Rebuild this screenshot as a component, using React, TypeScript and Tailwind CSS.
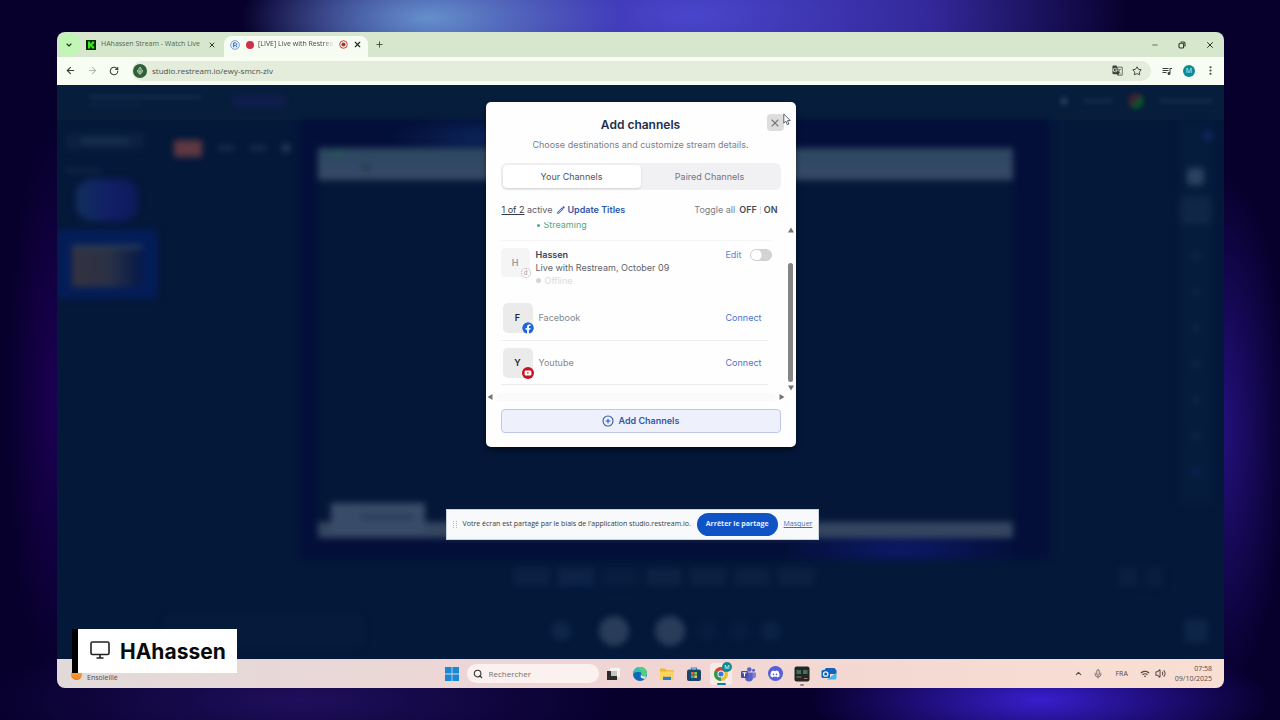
import type { ReactNode } from "react";
import {
  ArrowLeft,
  ArrowRight,
  ChevronDown,
  ChevronUp,
  CirclePlus,
  EllipsisVertical,
  Mic,
  Minus,
  Plus,
  RotateCw,
  Search,
  Star,
  Volume2,
  X,
} from "lucide-react";
import { FaDiscord, FaFacebook } from "react-icons/fa";
import { MdGTranslate, MdOutlineModeEdit, MdQueueMusic, MdWifi } from "react-icons/md";

function KickLogo() {
  return (
    <svg viewBox="0 0 10 10" className="size-[10px] shrink-0" aria-hidden="true">
      <rect width="10" height="10" fill="#062b06" />
      <path d="M2 1.5h2.2v2h.8v-1h1v-1h2.2v2.2H7.2v.8H6.4v1h.8v.8h1v2.2H6v-1H5v-1h-.8v2H2z" fill="#35e81c" />
    </svg>
  );
}

function RestreamLogo() {
  return (
    <svg viewBox="0 0 10 10" className="size-[10px] shrink-0" aria-hidden="true">
      <circle cx="5" cy="5" r="4.4" fill="#dfeafa" stroke="#6a94dc" strokeWidth=".8" />
      <path d="M3.6 7.2V2.9h1.9a1.3 1.3 0 0 1 .3 2.5L7 7.2M3.6 5.4h2" fill="none" stroke="#3c6fc9" strokeWidth="1" />
    </svg>
  );
}

function RecordMark() {
  return (
    <svg viewBox="0 0 10 10" className="size-[9px] shrink-0" aria-hidden="true">
      <circle cx="5" cy="5" r="4.2" fill="none" stroke="#b3322e" strokeWidth="1" />
      <circle cx="5" cy="5" r="2.3" fill="#b3322e" />
    </svg>
  );
}

function BrowserTabs() {
  return (
    <div className="flex h-[25px] shrink-0 items-stretch bg-[#d6e7cd] text-[7px] text-[#566452]">
      <button aria-label="Search tabs" className="my-[2px] ml-[2px] flex w-5 items-center justify-center rounded-md bg-[#c0f5b4] text-[#1d3a1b]">
        <ChevronDown className="size-2" strokeWidth={3.5} />
      </button>
      <div className="ml-[7px] flex w-[138px] items-center gap-[5px] pr-2">
        <KickLogo />
        <span className="min-w-0 flex-1 overflow-hidden whitespace-nowrap">HAhassen Stream - Watch Live</span>
        <button aria-label="Close tab HAhassen Stream">
          <X className="size-2 text-[#2f3a2c]" strokeWidth={3} />
        </button>
      </div>
      <div className="mt-1 flex w-[144px] items-center gap-[5px] rounded-t-lg bg-[#f7fcf2] pr-[6px] pb-1 pl-[6px] text-[#42493f]">
        <RestreamLogo />
        <span className="ml-[1px] size-2 shrink-0 rounded-full bg-[#cf3049]" />
        <span className="-ml-px min-w-0 flex-1 overflow-hidden mask-r-from-85% whitespace-nowrap">[LIVE] Live with Restream</span>
        <RecordMark />
        <button aria-label="Close tab Live with Restream">
          <X className="size-[9px] text-[#1f241e]" strokeWidth={3} />
        </button>
      </div>
      <button aria-label="New tab" className="ml-[7px]">
        <Plus className="size-[9px] text-[#40513c]" strokeWidth={2.5} />
      </button>
      <div className="ml-auto flex items-center gap-[19px] pr-[9px] text-[#30362e]">
        <button aria-label="Minimize">
          <Minus className="size-2" strokeWidth={2} />
        </button>
        <button aria-label="Restore">
          <svg viewBox="0 0 8 8" className="size-2" fill="none" stroke="currentColor" strokeWidth="1.1">
            <rect x="1" y="2.2" width="4.6" height="4.8" rx="1" />
            <path d="M2.6 1h3a1.4 1.4 0 0 1 1.4 1.4v3" />
          </svg>
        </button>
        <button aria-label="Close window">
          <X className="size-[10px]" strokeWidth={2.4} />
        </button>
      </div>
    </div>
  );
}

function AddressBar() {
  return (
    <div className="flex h-7 shrink-0 items-center bg-[#f8fdf3] pb-px text-[#3d433b]">
      <button aria-label="Back" className="ml-2">
        <ArrowLeft className="size-[11px]" strokeWidth={2.4} />
      </button>
      <button aria-label="Forward" className="ml-[11px] text-[#b0b6ac]">
        <ArrowRight className="size-[11px]" strokeWidth={2.2} />
      </button>
      <button aria-label="Reload" className="ml-[11px]">
        <RotateCw className="size-[10px]" strokeWidth={2.6} />
      </button>
      <div className="ml-[13px] flex h-[20px] min-w-0 flex-1 items-center rounded-full bg-[#e4ecdc] pl-px">
        <span className="flex size-[14px] items-center justify-center rounded-full bg-[#2d6136] text-[#e4f2e0]">
          <Mic className="size-2" strokeWidth={2.6} />
        </span>
        <input
          aria-label="Address"
          defaultValue="studio.restream.io/ewy-smcn-zlv"
          className="ml-[5px] min-w-0 flex-1 bg-transparent text-[8px] leading-3 text-[#4a5147] outline-none"
        />
        <button aria-label="Translate">
          <MdGTranslate className="size-[11px]" />
        </button>
        <button aria-label="Bookmark" className="mr-[9px] ml-[9px]">
          <Star className="size-[10px]" strokeWidth={2.4} />
        </button>
      </div>
      <button aria-label="Media controls" className="ml-[10px]">
        <MdQueueMusic className="size-3" />
      </button>
      <button aria-label="Profile" className="ml-[10px] flex size-3 items-center justify-center rounded-full bg-[#108a92] text-[7px] leading-none text-[#d4f0f0]">
        M
      </button>
      <button aria-label="Menu" className="mr-2 ml-[10px]">
        <EllipsisVertical className="size-[11px]" strokeWidth={2.6} />
      </button>
    </div>
  );
}

function StudioBackdrop() {
  return (
    <div aria-hidden="true" className="flex flex-1 flex-col bg-[#04183a]">
      <div className="flex h-[35px] items-center bg-[#071d3c] px-3 pb-[3px]">
        <div className="ml-5 flex flex-col gap-1 blur-[2px]">
          <span className="h-1 w-28 bg-[#122a4a]" />
          <span className="h-1 w-13 bg-[#0d2444]" />
        </div>
        <span className="ml-8 h-3 w-13 rounded bg-[#101e4d] blur-[3px]" />
        <div className="ml-auto flex items-center gap-4 blur-[2px]">
          <span className="size-2 rounded-full bg-[#22395a]" />
          <span className="h-1 w-7 bg-[#142d4d]" />
          <span className="size-4 rounded-full bg-linear-to-br from-[#3a2233] from-40% to-[#08502c] to-60%" />
          <span className="h-1 w-13 bg-[#142d4b]" />
        </div>
      </div>
      <div className="flex flex-1">
        <div className="flex w-[100px] flex-col blur-[3px]">
          <span className="mt-3 ml-2 h-[18px] w-20 rounded bg-[#0b2140] px-4 py-[7px]">
            <span className="block h-1 bg-[#1e3857]" />
          </span>
          <span className="mt-[19px] ml-2 h-[3px] w-9 bg-[#152d4d]" />
          <span className="mt-[7px] ml-[19px] h-[42px] w-[62px] rounded-2xl bg-linear-to-r from-[#122f5b] via-[#111f66] to-[#0e1a5c]" />
          <div className="mt-[9px] h-[68px] bg-[#041d58] px-[15px] pt-[15px]">
            <span className="block h-1 bg-[#2a4054]" />
            <span className="block h-[38px] bg-linear-to-r from-[#33313f] via-[#2c3145] to-[#061848]" />
          </div>
        </div>
        <div className="flex min-w-0 flex-1 flex-col">
          <div className="flex flex-1">
            <div className="flex w-[143px] items-start gap-4 pt-5 pl-[17px] blur-[3px]">
              <span className="h-[17px] w-7 bg-[#5f3841]" />
              <span className="mt-[6px] h-1 w-4 bg-[#1c3554]" />
              <span className="mt-[6px] h-1 w-4 bg-[#1c3554]" />
              <span className="mt-1 size-2 rounded-full bg-[#2b435f]" />
            </div>
            <div className="flex flex-1 flex-col bg-[#030f38] bg-[radial-gradient(ellipse_90px_24px_at_180px_18px,#0c2459,transparent),radial-gradient(ellipse_120px_30px_at_600px_430px,#0c1a68,transparent)] pt-7 pr-[37px] pb-[21px] pl-[18px] blur-[3px]">
              <div className="flex h-8 items-start gap-5 bg-linear-to-b from-[#2c4760] to-[#374a68] px-4 pt-1 pr-2">
                <span className="h-1 w-2 bg-[#20634b]" />
                <span className="mt-3 size-2 rounded-full bg-[#233c50]" />
              </div>
              <div className="flex flex-1 flex-col items-start justify-end bg-[#041738] pl-[13px]">
                <span className="h-[19px] w-[94px] bg-[#384c69] px-3 pt-3">
                  <span className="ml-auto block h-1 w-13 bg-[#22385a]" />
                </span>
              </div>
              <div className="h-4 bg-[#344560] pl-[13px]">
                <span className="block h-3 w-[94px] bg-[#384c69]" />
              </div>
            </div>
            <div className="w-[117px]" />
          </div>
          <div className="flex h-9 items-center justify-between pl-[357px] blur-[3px]">
            <div className="flex gap-2">
              <span className="h-[18px] w-9 bg-[#0b2143]" />
              <span className="h-[18px] w-9 bg-[#0e2348]" />
              <span className="h-[18px] w-9 bg-[#081d3f]" />
              <span className="h-[18px] w-9 bg-[#0c2243]" />
              <span className="h-[18px] w-9 bg-[#0b2141]" />
              <span className="h-[18px] w-9 bg-[#0b2141]" />
              <span className="h-[18px] w-9 bg-[#0b2141]" />
            </div>
            <div className="mr-1 flex gap-2">
              <span className="h-5 w-[18px] bg-[#0a2041]" />
              <span className="h-5 w-[18px] bg-[#081e3e]" />
            </div>
          </div>
          <div className="flex h-16 items-center pt-2 pl-2 blur-[3px]">
            <span className="h-8 w-[198px] rounded bg-[#061b3c]" />
            <span className="ml-[188px] size-5 rounded-full bg-[#0f2648]" />
            <span className="ml-[28px] size-[30px] rounded-full bg-[#293d5b]" />
            <span className="ml-[26px] size-[30px] rounded-full bg-[#293d5b]" />
            <span className="ml-3 size-5 rounded-full bg-[#071d3f]" />
            <span className="ml-3 size-5 rounded-full bg-[#071d3f]" />
            <span className="ml-3 size-5 rounded-full bg-[#0b2244]" />
          </div>
        </div>
        <div className="flex w-[57px] flex-col items-center justify-between pb-3 blur-[3px]">
          <div className="flex w-8 flex-col items-center gap-7 bg-[#061c3d] pt-3 pb-7">
            <span className="size-2 self-end rounded-full bg-[#112b6c]" />
            <span className="size-[17px] rounded bg-[#2c4260]" />
            <span className="-mt-4 h-[27px] w-8 rounded bg-[#0f2646]" />
            <span className="size-2 rounded-full bg-[#0e2745]" />
            <span className="size-2 rounded-full bg-[#0d2447]" />
            <span className="size-2 rounded-full bg-[#0d2447]" />
            <span className="size-2 rounded-full bg-[#0e2745]" />
            <span className="size-2 rounded-full bg-[#0d2447]" />
            <span className="size-2 rounded-full bg-[#0e2745]" />
            <span className="size-2 rounded-full bg-[#0b2156]" />
          </div>
          <span className="mb-1 size-6 rounded bg-[#0d2547]" />
        </div>
      </div>
    </div>
  );
}

function Triangle({ className }: { className: string }) {
  return (
    <svg viewBox="0 0 6 6" className={`size-[6px] ${className}`} fill="#70757b" aria-hidden="true">
      <path d="M3 .5 6 5.5H0z" />
    </svg>
  );
}

function ConnectRow({ letter, name, badge }: { letter: string; name: string; badge: ReactNode }) {
  return (
    <div className="mr-6 ml-[2px] flex h-[30px] items-center">
      <div className="relative flex size-[30px] items-center justify-center rounded-[5px] bg-[#ebebeb] text-[9px] font-semibold text-[#22262c]">
        {letter}
        <span className="absolute -right-px -bottom-px size-3">{badge}</span>
      </div>
      <span className="ml-[6px] text-[#85888e]">{name}</span>
      <button className="ml-auto text-[#4a73cf]" aria-label={`Connect ${name}`}>
        Connect
      </button>
    </div>
  );
}

function AddChannelsDialog() {
  return (
    <section
      role="dialog"
      aria-labelledby="dialog-title"
      className="relative flex w-[310px] flex-col rounded-[5px] bg-[#fefefe] px-[15px] pt-3 pb-[14px] font-[Inter,'Liberation_Sans',sans-serif] text-[9px] leading-3 text-[#5d626c] shadow-md shadow-black/40"
    >
      <h1 id="dialog-title" className="text-center text-[12px] leading-[22px] font-semibold text-[#222f4d]">
        Add channels
      </h1>
      <p className="mt-[3px] text-center text-[#7c8088]">Choose destinations and customize stream details.</p>
      <button aria-label="Close" className="absolute top-3 right-3 flex size-[17px] items-center justify-center rounded bg-[#dddddd] text-[#74777c]">
        <X className="size-3" strokeWidth={2.2} />
      </button>
      <svg viewBox="0 0 8 13" className="absolute top-[11px] right-[5px] h-[13px] w-2" fill="#fff" stroke="#4a5062" strokeWidth=".9" aria-hidden="true">
        <path d="M.8.9v9.2l2.1-1.9 1.4 3.5 1.600-.7-1.400-3.400h2.800z" />
      </svg>

      <div role="tablist" className="mt-3 flex h-[27px] rounded-md bg-[#f1f1f3] p-[2px]">
        <button role="tab" aria-selected="true" className="flex-1 rounded bg-white text-[#4e5561] shadow-sm">
          Your Channels
        </button>
        <button role="tab" aria-selected="false" className="flex-1 text-[#70757f]">
          Paired Channels
        </button>
      </div>

      <div className="mt-[14px] flex items-center pr-[3px] pl-[1px]">
        <span>
          <span className="text-[#343b49] underline">1 of 2</span> active
        </span>
        <button className="ml-1 flex items-center gap-px font-semibold text-[#2f57ad]">
          <MdOutlineModeEdit className="size-[10px]" />
          Update Titles
        </button>
        <span className="ml-auto text-[#787c84]">Toggle all</span>
        <button className="ml-1 font-semibold text-[#464b54]">OFF</button>
        <span className="mx-[3px] h-2 w-px bg-[#dcdee2]" />
        <button className="font-semibold text-[#464b54]">ON</button>
      </div>

      <div className="-mx-[15px] mt-[6px] flex h-[171px]">
        <div className="min-w-0 flex-1 overflow-hidden pl-[15px]">
          <div className="flex h-[18px] items-start pl-9 text-[#55a981]">
            <span className="-mt-[3px] flex items-center gap-1">
              <span className="size-[3px] rounded-full bg-[#55a981]" />
              Streaming
            </span>
          </div>
          <div className="mr-[15px] h-px bg-[#f4f4f5]" />
          <div className="mt-[7px] mr-[14px] flex h-[55px]">
            <div className="relative flex size-[29px] items-center justify-center rounded-[5px] bg-[#f5f5f5] font-semibold text-[#9b9b9b]">
              H
              <span className="absolute -right-px -bottom-px flex size-[10px] items-center justify-center rounded-full border border-dotted border-[#a8a8a8] bg-[#fafafa] text-[6px] leading-none font-normal">
                d
              </span>
            </div>
            <div className="ml-[6px] leading-[13px]">
              <p className="font-semibold text-[#3c4358]">Hassen</p>
              <p>Live with Restream, October 09</p>
              <p className="flex items-center gap-1 text-[#dcdcde]">
                <span className="size-[5px] rounded-full bg-[#d4d4d6]" />
                Offline
              </p>
            </div>
            <div className="ml-auto flex h-[13px] items-center gap-2">
              <button className="text-[#5c88da]">Edit</button>
              <input
                type="checkbox"
                aria-label="Stream to Hassen"
                className="h-3 w-[22px] appearance-none rounded-full border border-[#cfcfcf] bg-[radial-gradient(circle_at_5px_5px,#fff_5px,#d3d3d3_6px)]"
              />
            </div>
          </div>
          <ConnectRow letter="F" name="Facebook" badge={<FaFacebook className="size-3 rounded-full bg-white text-[#1f66d6]" />} />
          <div className="my-[7px] mr-[18px] h-px bg-[#f0f0f1]" />
          <ConnectRow
            letter="Y"
            name="Youtube"
            badge={
              <svg viewBox="0 0 12 12" className="size-3" aria-hidden="true">
                <circle cx="6" cy="6" r="6" fill="#cb1020" />
                <rect x="2.6" y="3.5" width="6.8" height="5" rx="1.3" fill="#fff" />
                <path d="M5.3 4.9v2.2L7.1 6z" fill="#cb1020" />
              </svg>
            }
          />
          <div className="mt-[6px] mr-[18px] h-px bg-[#ececee]" />
        </div>
        <div className="flex w-[10px] flex-col items-center pt-[5px] pb-[2px]">
          <Triangle className="" />
          <span className="mt-[30px] w-[5px] flex-1 rounded-full bg-[#858585]" />
          <Triangle className="mt-[3px] rotate-180" />
        </div>
      </div>
      <div className="-mt-px mr-[-4px] -ml-[14px] flex h-[10px] items-center gap-1">
        <Triangle className="-rotate-90" />
        <span className="h-2 flex-1 rounded-full bg-[#fafafa]" />
        <Triangle className="rotate-90" />
      </div>

      <button className="mt-[7px] flex h-6 items-center justify-center gap-[5px] rounded border border-[#bcc7ea] bg-[#eef1fb] font-semibold text-[#3258a6]">
        <CirclePlus className="size-3" strokeWidth={2.2} />
        Add Channels
      </button>
    </section>
  );
}

function ShareBar() {
  return (
    <div className="flex h-[31px] items-center border border-[#c9d2de] bg-[#f7f9fa] px-[6px] text-[7px] whitespace-nowrap text-[#363b41]">
      <span className="h-[7px] w-1 border-x border-dotted border-[#b5b9bd]" />
      <span className="ml-[6px]">Votre écran est partagé par le biais de l'application studio.restream.io.</span>
      <button className="ml-[6px] h-[23px] rounded-full bg-[#0f53c5] px-[9px] font-bold text-[#e4edff]">Arrêter le partage</button>
      <a href="#masquer" className="ml-[6px] text-[#4570b4] underline">
        Masquer
      </a>
    </div>
  );
}

function WindowsLogo() {
  return (
    <svg viewBox="0 0 16 16" className="size-4" fill="#1888d8">
      <path d="M1 1h6.600v6.600H1zM8.400 1H15v6.600H8.400zM1 8.400h6.600V15H1zM8.400 8.400H15V15H8.400z" />
    </svg>
  );
}

function TaskViewIcon() {
  return (
    <svg viewBox="0 0 16 16" className="size-4">
      <rect x="5" y="2" width="10" height="9" fill="#f7f3f1" />
      <path d="M2 5h4v5h6v4H2z" fill="#2d2a2b" />
      <path d="M6 5h6v5H6z" fill="#c9c4c3" />
    </svg>
  );
}

function EdgeIcon() {
  return (
    <svg viewBox="0 0 16 16" className="size-4">
      <circle cx="8" cy="8" r="7" fill="#1268b8" />
      <path d="M1.2 6.6C2 3 4.7 1 8 1c4 0 7 2.7 7 6 0 2-1.6 3.4-3.6 3.4-1.5 0-2.5-.6-2-1.5.5-1 .1-2.9-2.4-2.9C4.6 6 2.200 6.200 1.200 8z" fill="#35bdb8" />
      <path d="M8 1c4 0 7 2.7 7 6 0 2-1.6 3.400-3.600 3.400-1.500 0-2.500-.6-2-1.500C10.400 6 9 3 5 2z" fill="#55cf7c" />
      <path d="M9.500 8.600c-.6 1.200.6 2 2 2 1.300 0 2.400-.4 3-1L13 12.700c-3.200.4-5.800-1.700-3.500-4.100z" fill="#e9eef2" />
    </svg>
  );
}

function FolderIcon() {
  return (
    <svg viewBox="0 0 16 16" className="size-4">
      <path d="M1 2.5h5l1.500 1.800H15V13H1z" fill="#eeb92f" />
      <path d="M1 5.500h14V14H1z" fill="#fbd45d" />
      <path d="M4 14v-3.200h8V14z" fill="#2482cf" />
    </svg>
  );
}

function StoreIcon() {
  return (
    <svg viewBox="0 0 16 16" className="size-4">
      <path d="M5.5 4V2h5v2" fill="none" stroke="#2d8bd0" strokeWidth="1.2" />
      <rect x="1" y="3.5" width="14" height="11.5" rx="2" fill="#17466f" />
      <path d="M5 6h2.700v2.700H5z" fill="#e9663c" />
      <path d="M8.300 6H11v2.700H8.300z" fill="#8fc640" />
      <path d="M5 9.300h2.700V12H5z" fill="#39a5e4" />
      <path d="M8.300 9.300H11V12H8.300z" fill="#f5c833" />
    </svg>
  );
}

function ChromeIcon() {
  return (
    <svg viewBox="0 0 16 16" className="size-4">
      <circle cx="8" cy="8" r="7" fill="#e9bf35" />
      <path d="M8 8 1.940 4.500A7 7 0 0 1 14.060 4.500z" fill="#d94236" />
      <path d="M8 8 1.940 4.500A7 7 0 0 0 8 15z" fill="#2e9a50" />
      <circle cx="8" cy="8" r="3.5" fill="#fff" />
      <circle cx="8" cy="8" r="2.6" fill="#3a78d8" />
    </svg>
  );
}

function TeamsIcon() {
  return (
    <svg viewBox="0 0 16 16" className="size-4" fill="#5a60c4">
      <circle cx="9.3" cy="3.5" r="2.3" />
      <circle cx="13.5" cy="4.3" r="1.5" />
      <path d="M5 6.500h8v5a4 4 0 0 1-8 0z" />
      <path d="M12.500 6.500H16V10a2.500 2.500 0 0 1-3.500 2z" fill="#7d82d9" />
      <rect x="1" y="5" width="7" height="7" rx="1" fill="#444aa8" />
      <path d="M2.500 6.800h4M4.500 6.800v3.700" stroke="#fff" strokeWidth="1" />
    </svg>
  );
}

function TerminalIcon() {
  return (
    <svg viewBox="0 0 16 16" className="size-4">
      <rect x=".5" y=".5" width="15" height="15" rx="2" fill="#252726" />
      <rect x="2.5" y="4" width="4.5" height="4" fill="#3d7460" />
      <rect x="9" y="4" width="4.5" height="4" fill="#486f63" />
      <path d="M2.500 11h5M10 12.500h3.500" stroke="#a47863" strokeWidth="1" />
    </svg>
  );
}

function OutlookIcon() {
  return (
    <svg viewBox="0 0 16 16" className="size-4">
      <path d="M3 4.500 5 2h8.500l2 2.500V8H3z" fill="#1761b8" />
      <path d="m6 13.500 9.500-7V12a1.500 1.500 0 0 1-1.500 1.500H6z" fill="#42b7ef" />
      <rect x=".5" y="4" width="8.5" height="8" rx="1.5" fill="#0d64b8" />
      <circle cx="4.700" cy="8" r="2.200" fill="none" stroke="#e3f2fc" strokeWidth="1.3" />
    </svg>
  );
}

function TaskButton({ label, children }: { label: string; children: ReactNode }) {
  return (
    <button aria-label={label} className="flex h-full w-[27px] items-center justify-center">
      {children}
    </button>
  );
}

function Taskbar() {
  return (
    <footer className="grid h-[29px] shrink-0 grid-cols-[1fr_auto_1fr] items-center bg-linear-to-r from-[#e2dada] via-[#f0d5d3] via-50% to-[#f9dfd2] text-[#544c4c]">
      <div className="flex h-full items-end gap-[5px] pb-1 pl-[14px] text-[7px] leading-3">
        <span className="mb-1 size-[11px] rounded-full bg-linear-to-b from-[#f4b23c] to-[#ee7d20]" />
        Ensoleillé
      </div>
      <div className="flex h-full items-center pl-[5px]">
        <button aria-label="Start" className="mr-[7px]">
          <WindowsLogo />
        </button>
        <label className="flex h-[19px] w-[132px] items-center gap-[6px] rounded-full bg-[#fbf1ee] px-[6px]">
          <Search className="size-[10px] shrink-0 text-[#343231]" strokeWidth={2.6} />
          <span className="sr-only">Rechercher</span>
          <input type="search" placeholder="Rechercher" className="w-full min-w-0 bg-transparent text-[8px] leading-3 outline-none placeholder:text-[#77706f]" />
        </label>
        <div className="ml-px flex h-full">
          <TaskButton label="Task view">
            <TaskViewIcon />
          </TaskButton>
          <TaskButton label="Edge">
            <EdgeIcon />
          </TaskButton>
          <TaskButton label="Files">
            <FolderIcon />
          </TaskButton>
          <TaskButton label="Store">
            <StoreIcon />
          </TaskButton>
          <TaskButton label="Chrome">
            <span className="relative flex size-[22px] items-center justify-center rounded bg-[#f8ebe7]">
              <ChromeIcon />
              <span className="absolute -top-px right-0 flex size-[10px] items-center justify-center rounded-full bg-[#128a8e] text-[6px] leading-none text-white">
                M
              </span>
              <span className="absolute bottom-0 h-[2px] w-[9px] rounded-full bg-[#1a75b4]" />
            </span>
          </TaskButton>
          <TaskButton label="Teams">
            <TeamsIcon />
          </TaskButton>
          <TaskButton label="Discord">
            <span className="flex size-[15px] items-center justify-center rounded-full bg-[#545fd8]">
              <FaDiscord className="size-[10px] text-white" />
            </span>
          </TaskButton>
          <TaskButton label="Terminal">
            <span className="relative flex justify-center">
              <TerminalIcon />
              <span className="absolute -bottom-1 h-[2px] w-1 rounded-full bg-[#8f8585]" />
            </span>
          </TaskButton>
          <TaskButton label="Outlook">
            <OutlookIcon />
          </TaskButton>
        </div>
      </div>
      <div className="flex items-center justify-end pr-3 text-[7px] leading-[10px]">
        <ChevronUp className="size-[9px]" strokeWidth={2.8} />
        <Mic className="ml-[10px] size-[10px] text-[#716a6a]" strokeWidth={2.2} />
        <span className="ml-3">FRA</span>
        <MdWifi className="ml-3 size-[10px]" />
        <Volume2 className="ml-[5px] size-[11px]" strokeWidth={2.2} />
        <span className="ml-[9px] text-right">
          07:58
          <br />
          09/10/2025
        </span>
      </div>
    </footer>
  );
}

function NameBadge() {
  return (
    <div className="flex h-11 items-center border-l-[6px] border-black bg-white pr-[11px] pl-3 font-[Inter,'Liberation_Sans',sans-serif] text-[21px] leading-none font-bold text-[#0a0a0a]">
      <svg viewBox="0 0 20 18" className="mb-[2px] h-[18px] w-5" fill="none" stroke="#222" strokeWidth="1.6" aria-hidden="true">
        <rect x="1" y="1" width="18" height="12.5" rx="1.5" />
        <path d="M10 13.500V17M6.500 17h7" />
      </svg>
      <span className="mt-px ml-[10px]">HAhassen</span>
    </div>
  );
}

export default function App() {
  return (
    <div className="flex min-h-screen flex-col bg-[#07002c] bg-[radial-gradient(ellipse_190px_70px_at_430px_18px,#6590cc,transparent),radial-gradient(ellipse_440px_150px_at_690px_15px,#4a46cc,#33289a_55%,transparent),radial-gradient(ellipse_230px_60px_at_1040px_700px,#381dcc,transparent),radial-gradient(ellipse_320px_70px_at_300px_700px,#1f0f5c,transparent),radial-gradient(ellipse_66px_260px_at_1222px_430px,#24107c,transparent),radial-gradient(ellipse_50px_280px_at_57px_400px,#1c0054,transparent)] py-8 pr-14 pl-[57px] font-['Open_Sans','Noto_Sans',sans-serif]">
      <div className="relative flex flex-1 flex-col">
        <div className="flex flex-1 flex-col overflow-hidden rounded-lg">
          <BrowserTabs />
          <AddressBar />
          <main className="relative flex flex-1 flex-col overflow-hidden">
            <StudioBackdrop />
            <div className="absolute inset-x-0 top-[17px] flex justify-center">
              <AddChannelsDialog />
            </div>
            <div className="absolute inset-x-0 bottom-[119px] flex justify-center pr-4">
              <ShareBar />
            </div>
          </main>
          <Taskbar />
        </div>
        <div className="absolute bottom-[15px] left-[15px]">
          <NameBadge />
        </div>
      </div>
    </div>
  );
}
